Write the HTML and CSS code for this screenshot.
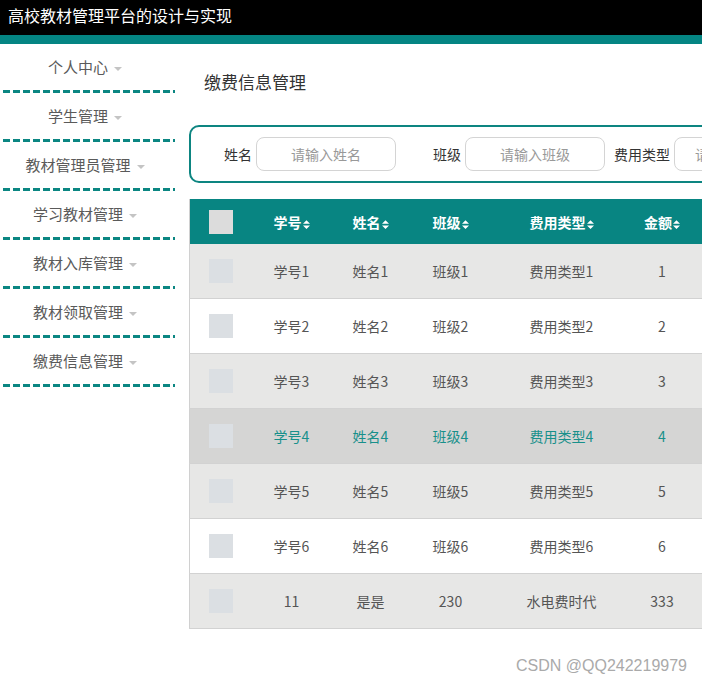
FILE: index.html
```html
<!DOCTYPE html>
<html lang="zh-CN">
<head>
    <meta charset="UTF-8">
    <meta name="viewport" content="width=device-width, initial-scale=1.0">
    <title>缴费信息管理</title>
    <link rel="stylesheet" href="styles.css">
</head>
<body>
    <div class="topbar">高校教材管理平台的设计与实现</div>
    <div class="stripe"></div>

    <div class="layout">
        <ul class="menu">
            <li><span>个人中心</span><i class="caret"></i></li>
            <li><span>学生管理</span><i class="caret"></i></li>
            <li><span>教材管理员管理</span><i class="caret"></i></li>
            <li><span>学习教材管理</span><i class="caret"></i></li>
            <li><span>教材入库管理</span><i class="caret"></i></li>
            <li><span>教材领取管理</span><i class="caret"></i></li>
            <li><span>缴费信息管理</span><i class="caret"></i></li>
        </ul>

        <div class="main">
            <h2 class="page-title">缴费信息管理</h2>

            <div class="search">
                <div class="field">
                    <label>姓名</label>
                    <input type="text" placeholder="请输入姓名">
                </div>
                <div class="field">
                    <label>班级</label>
                    <input type="text" placeholder="请输入班级">
                </div>
                <div class="field">
                    <label>费用类型</label>
                    <input type="text" placeholder="请输入费用类型">
                </div>
            </div>

            <table class="grid">
                <colgroup>
                    <col style="width: 62px">
                    <col style="width: 80px">
                    <col style="width: 78px">
                    <col style="width: 82px">
                    <col style="width: 140px">
                    <col style="width: 61px">
                    <col style="width: 160px">
                </colgroup>
                <thead>
                    <tr>
                        <th><span class="check head"></span></th>
                        <th>学号<svg class="sort" viewBox="0 0 8 10"><path d="M4 0L8 4H0z M0 6H8L4 10z"/></svg></th>
                        <th>姓名<svg class="sort" viewBox="0 0 8 10"><path d="M4 0L8 4H0z M0 6H8L4 10z"/></svg></th>
                        <th>班级<svg class="sort" viewBox="0 0 8 10"><path d="M4 0L8 4H0z M0 6H8L4 10z"/></svg></th>
                        <th>费用类型<svg class="sort" viewBox="0 0 8 10"><path d="M4 0L8 4H0z M0 6H8L4 10z"/></svg></th>
                        <th>金额<svg class="sort" viewBox="0 0 8 10"><path d="M4 0L8 4H0z M0 6H8L4 10z"/></svg></th>
                        <th></th>
                    </tr>
                </thead>
                <tbody>
                    <tr><td><span class="check"></span></td><td>学号1</td><td>姓名1</td><td>班级1</td><td>费用类型1</td><td>1</td><td></td></tr>
                    <tr><td><span class="check"></span></td><td>学号2</td><td>姓名2</td><td>班级2</td><td>费用类型2</td><td>2</td><td></td></tr>
                    <tr><td><span class="check"></span></td><td>学号3</td><td>姓名3</td><td>班级3</td><td>费用类型3</td><td>3</td><td></td></tr>
                    <tr class="hover"><td><span class="check"></span></td><td>学号4</td><td>姓名4</td><td>班级4</td><td>费用类型4</td><td>4</td><td></td></tr>
                    <tr><td><span class="check"></span></td><td>学号5</td><td>姓名5</td><td>班级5</td><td>费用类型5</td><td>5</td><td></td></tr>
                    <tr><td><span class="check"></span></td><td>学号6</td><td>姓名6</td><td>班级6</td><td>费用类型6</td><td>6</td><td></td></tr>
                    <tr><td><span class="check"></span></td><td>11</td><td>是是</td><td>230</td><td>水电费时代</td><td>333</td><td></td></tr>
                </tbody>
            </table>

            <div class="mark">CSDN @QQ242219979</div>
        </div>
    </div>
</body>
</html>
```

FILE: styles.css
```css
body {
    margin: 0;
    overflow: hidden;
    font-family: "Noto Sans CJK SC", "Liberation Sans", sans-serif;
    font-size: 14px;
    color: #555;
    background: #fff;
}

.topbar {
    height: 35px;
    line-height: 30px;
    padding-left: 8px;
    background: #000;
    color: #fff;
    font-size: 16px;
}

.stripe {
    height: 9px;
    background: #048583;
}

.layout {
    display: flex;
    width: 1000px;
}

.menu {
    list-style: none;
    margin: 0;
    padding: 0 0 0 3px;
    width: 172px;
    flex-shrink: 0;
}

.menu li {
    height: 46px;
    line-height: 46px;
    padding: 0 8px 3px 0;
    text-align: center;
    font-size: 15px;
    color: #5a5a5a;
    background: repeating-linear-gradient(90deg, #0b8682 0 7px, transparent 7px 10px) bottom / 100% 3px no-repeat;
}

.caret {
    display: inline-block;
    margin-left: 6px;
    vertical-align: middle;
    border-left: 4px solid transparent;
    border-right: 4px solid transparent;
    border-top: 4px solid #c4c4c4;
}

.main {
    flex-shrink: 0;
    width: 800px;
    padding-left: 14px;
}

.page-title {
    margin: 26px 0 0 15px;
    font-size: 17px;
    font-weight: normal;
    line-height: 24px;
    color: #333;
}

.search {
    display: flex;
    margin-top: 31px;
    height: 54px;
    padding-left: 5px;
    align-items: center;
    border: 2px solid #0d8581;
    border-radius: 10px;
}

.field {
    display: flex;
    align-items: center;
    margin-right: 9px;
}

.field label {
    width: 56px;
    text-align: right;
    margin-right: 4px;
    color: #333;
}

.field input {
    box-sizing: border-box;
    width: 140px;
    height: 34px;
    border: 1px solid #d4d4d4;
    border-radius: 8px;
    text-align: center;
    font: inherit;
    outline: none;
}

.field input::placeholder {
    color: #999;
}

.grid {
    margin-top: 16px;
    table-layout: fixed;
    border-collapse: collapse;
    border-left: 1px solid #d0d0d0;
    width: 663px;
}

.grid th {
    height: 45px;
    padding: 0;
    background: #088582;
    color: #fff;
    font-weight: bold;
    text-align: center;
}

.sort {
    width: 7px;
    height: 9px;
    margin-left: 1px;
    fill: #fff;
    vertical-align: -1px;
}

.grid td {
    height: 54px;
    padding: 0;
    text-align: center;
    border-bottom: 1px solid #d2d2d2;
    background: #e7e7e6;
}

.grid tbody tr:nth-child(even) td {
    background: #fff;
}

.grid tbody tr.hover td {
    background: #d5d5d4;
    color: #18908b;
}

.check {
    display: inline-block;
    width: 24px;
    height: 24px;
    background: #dbdfe3;
    vertical-align: middle;
}

.check.head {
    background: #dcdcdc;
}

.mark {
    width: 498px;
    margin-top: 28px;
    text-align: right;
    color: #aaa;
    font-family: "Liberation Sans", sans-serif;
    font-size: 16px;
}
```
